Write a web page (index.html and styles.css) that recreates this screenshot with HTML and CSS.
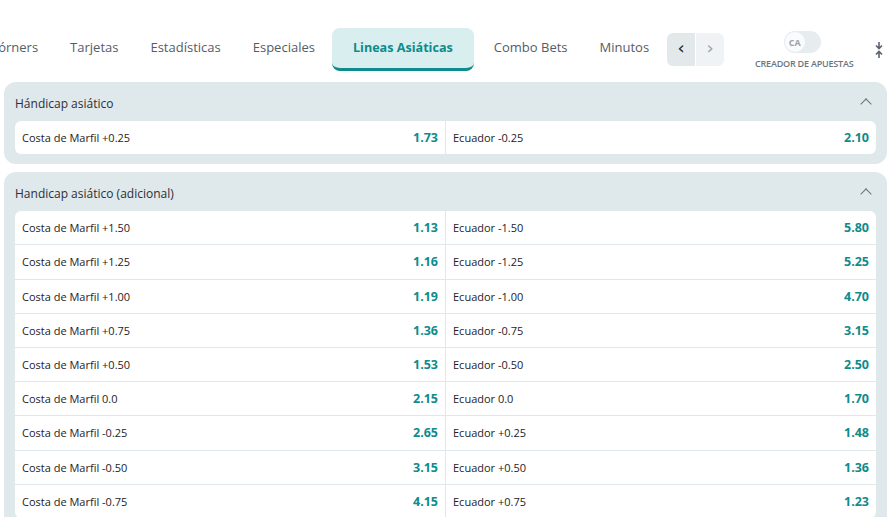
FILE: index.html
```html
<!DOCTYPE html>
<html lang="es">
<head>
  <meta charset="UTF-8">
  <title>Lineas Asiáticas</title>
  <link rel="stylesheet" href="styles.css">
</head>
<body>

  <div class="top-bar">
    <div class="tabs">
      <div class="tab-track">
        <span class="tab">Córners</span>
        <span class="tab">Tarjetas</span>
        <span class="tab">Estadísticas</span>
        <span class="tab">Especiales</span>
        <span class="tab active">Lineas Asiáticas</span>
        <span class="tab">Combo Bets</span>
        <span class="tab">Minutos</span>
      </div>
    </div>
    <div class="tab-arrows">
      <button class="arrow-btn dark">&#8249;</button>
      <button class="arrow-btn">&#8250;</button>
    </div>
    <div class="creator">
      <div class="toggle"><span class="knob">CA</span></div>
      <div class="creator-label">CREADOR DE APUESTAS</div>
    </div>
    <div class="collapse-icon">
      <svg width="10" height="18" viewBox="0 0 10 18">
        <path d="M5 1v6M2 4.5L5 7.5 8 4.5" fill="none" stroke="#5b6370" stroke-width="1.6"/>
        <path d="M5 17v-6M2 13.5L5 10.5 8 13.5" fill="none" stroke="#5b6370" stroke-width="1.6"/>
      </svg>
    </div>
  </div>

  <div class="market">
    <div class="market-head">
      <span>Hándicap asiático</span>
      <span class="chev"></span>
    </div>
    <div class="odds-grid">
      <div class="cell"><span>Costa de Marfil +0.25</span><b>1.73</b></div>
      <div class="cell"><span>Ecuador -0.25</span><b>2.10</b></div>
    </div>
  </div>

  <div class="market">
    <div class="market-head">
      <span>Handicap asiático (adicional)</span>
      <span class="chev"></span>
    </div>
    <div class="odds-grid">
      <div class="cell"><span>Costa de Marfil +1.50</span><b>1.13</b></div>
      <div class="cell"><span>Ecuador -1.50</span><b>5.80</b></div>
      <div class="cell"><span>Costa de Marfil +1.25</span><b>1.16</b></div>
      <div class="cell"><span>Ecuador -1.25</span><b>5.25</b></div>
      <div class="cell"><span>Costa de Marfil +1.00</span><b>1.19</b></div>
      <div class="cell"><span>Ecuador -1.00</span><b>4.70</b></div>
      <div class="cell"><span>Costa de Marfil +0.75</span><b>1.36</b></div>
      <div class="cell"><span>Ecuador -0.75</span><b>3.15</b></div>
      <div class="cell"><span>Costa de Marfil +0.50</span><b>1.53</b></div>
      <div class="cell"><span>Ecuador -0.50</span><b>2.50</b></div>
      <div class="cell"><span>Costa de Marfil 0.0</span><b>2.15</b></div>
      <div class="cell"><span>Ecuador 0.0</span><b>1.70</b></div>
      <div class="cell"><span>Costa de Marfil -0.25</span><b>2.65</b></div>
      <div class="cell"><span>Ecuador +0.25</span><b>1.48</b></div>
      <div class="cell"><span>Costa de Marfil -0.50</span><b>3.15</b></div>
      <div class="cell"><span>Ecuador +0.50</span><b>1.36</b></div>
      <div class="cell"><span>Costa de Marfil -0.75</span><b>4.15</b></div>
      <div class="cell"><span>Ecuador +0.75</span><b>1.23</b></div>
    </div>
  </div>

</body>
</html>
```

FILE: styles.css
```css
body {
  font-family: 'Open Sans', sans-serif;
  background-color: #ffffff;
  color: #2b2f36;
  margin: 0;
  padding: 0;
  overflow: hidden;
}

.top-bar {
  display: flex;
  align-items: center;
  height: 43px;
  margin-top: 28px;
  margin-bottom: 11px;
}

.tabs {
  flex-shrink: 0;
  width: 663px;
  overflow: hidden;
  align-self: stretch;
}

.tab-track {
  display: flex;
  align-items: stretch;
  height: 100%;
  margin-left: -26px;
}

.tab {
  display: flex;
  align-items: center;
  padding: 0 16px 5px;
  font-size: 13px;
  color: #555c68;
  white-space: nowrap;
}

.tab.active {
  margin: 0 4px 0 1px;
  padding: 0 21px 2px;
  background-color: #d8eeef;
  border-radius: 8px;
  border-bottom: 3px solid #0e8b8c;
  color: #0e8b8c;
  font-size: 12.6px;
  font-weight: 700;
}

.tab-arrows {
  flex-shrink: 0;
  display: flex;
  margin-left: 4px;
  border-radius: 6px;
  overflow: hidden;
}

.arrow-btn {
  width: 28px;
  height: 33px;
  border: none;
  background-color: #f0f3f5;
  color: #9aa2ab;
  font-size: 18px;
  line-height: 1;
  padding: 0 0 3px;
  font-family: 'DejaVu Sans', sans-serif;
}

.arrow-btn.dark {
  background-color: #e3e8eb;
  color: #1f242b;
  margin-right: 1px;
}

.creator {
  flex-shrink: 0;
  display: flex;
  flex-direction: column;
  align-items: center;
  margin-left: 31px;
  margin-top: 2px;
}

.toggle {
  width: 37px;
  height: 22px;
  border-radius: 11px;
  background-color: #e7ecef;
  margin-left: -4px;
}

.knob {
  display: flex;
  align-items: center;
  justify-content: center;
  width: 20px;
  height: 20px;
  margin: 1px;
  border-radius: 50%;
  background-color: #fafbfc;
  color: #9aa1a9;
  font-size: 9px;
  font-weight: 700;
}

.creator-label {
  margin-top: 4px;
  font-size: 9px;
  font-weight: 600;
  color: #6d747d;
  white-space: nowrap;
  letter-spacing: -0.2px;
}

.collapse-icon {
  flex-shrink: 0;
  margin-left: 21px;
  display: flex;
}

.market {
  background-color: #dfe8eb;
  border-radius: 12px;
  margin: 0 4px 8px;
  padding: 0 11px 10px;
}

.market-head {
  display: flex;
  justify-content: space-between;
  align-items: center;
  height: 35px;
  padding-top: 4px;
  font-size: 12px;
  color: #2b2f36;
}

.chev {
  width: 7px;
  height: 7px;
  border-left: 1.5px solid #6a717a;
  border-top: 1.5px solid #6a717a;
  transform: rotate(45deg);
  margin: 0 6px 0 0;
}

.odds-grid {
  display: grid;
  grid-template-columns: 1fr 1fr;
  gap: 1px;
  border-radius: 6px;
  overflow: hidden;
}

.cell {
  display: flex;
  justify-content: space-between;
  align-items: center;
  height: 33.2px;
  padding: 0 7px;
  background-color: #ffffff;
  font-size: 11px;
  color: #1e2228;
}

.cell b {
  font-size: 12.5px;
  font-weight: 700;
  color: #0e8b8c;
}
```
